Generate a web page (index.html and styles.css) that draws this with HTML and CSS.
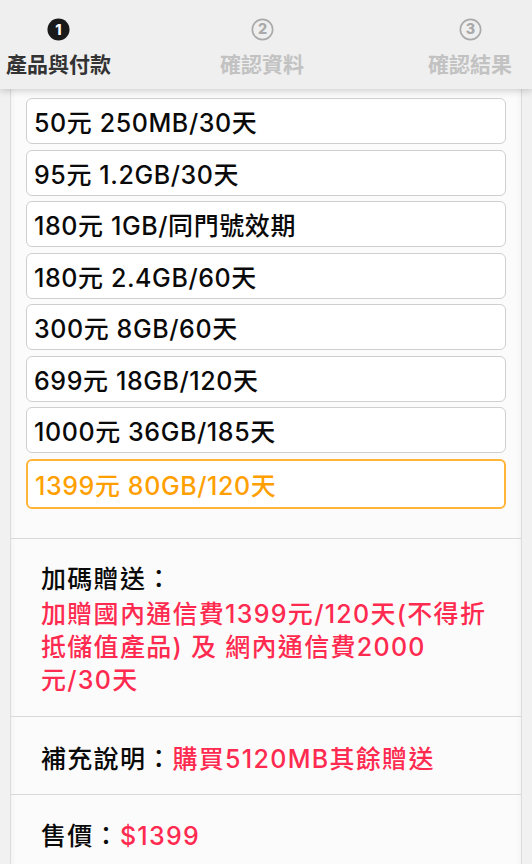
FILE: index.html
```html
<!DOCTYPE html>
<html lang="zh-Hant">
<head>
<meta charset="utf-8">
<link rel="stylesheet" href="styles.css">
</head>
<body>
<header class="steps">
  <div class="step active">
    <svg class="num" viewBox="0 0 24 24" width="23" height="23"><circle cx="12" cy="12" r="11.5" fill="#1a1a1a"/><text x="12" y="17.6" text-anchor="middle" class="numtxt" fill="#fff">1</text></svg>
    <span class="label">產品與付款</span>
  </div>
  <div class="step">
    <svg class="num" viewBox="0 0 24 24" width="23" height="23"><circle cx="12" cy="12" r="10.6" fill="none" stroke="#aaa" stroke-width="1.7"/><text x="12" y="17.2" text-anchor="middle" class="numtxt" fill="#aaa">2</text></svg>
    <span class="label">確認資料</span>
  </div>
  <div class="step">
    <svg class="num" viewBox="0 0 24 24" width="23" height="23"><circle cx="12" cy="12" r="10.6" fill="none" stroke="#aaa" stroke-width="1.7"/><text x="12" y="17.2" text-anchor="middle" class="numtxt" fill="#aaa">3</text></svg>
    <span class="label">確認結果</span>
  </div>
</header>
<main class="card">
  <div class="options">
    <div class="opt">50元 250MB/30天</div>
    <div class="opt">95元 1.2GB/30天</div>
    <div class="opt">180元 1GB/同門號效期</div>
    <div class="opt">180元 2.4GB/60天</div>
    <div class="opt">300元 8GB/60天</div>
    <div class="opt">699元 18GB/120天</div>
    <div class="opt">1000元 36GB/185天</div>
    <div class="opt selected">1399元 80GB/120天</div>
  </div>
  <section class="sec gift">
    <div class="title block">加碼贈送：</div>
    <div class="red">加贈國內通信費1399元/120天(不得折抵儲值產品) 及 網內通信費2000元/30天</div>
  </section>
  <section class="sec note">
    <span class="title">補充說明：</span><span class="red">購買5120MB其餘贈送</span>
  </section>
  <section class="sec price">
    <span class="title">售價：</span><span class="red">$1399</span>
  </section>
</main>
</body>
</html>
```
FILE: styles.css
```css
html, body {
  margin: 0;
  padding: 0;
}
body {
  width: 532px;
  height: 864px;
  overflow: hidden;
  background: #f1f1f1;
  font-family: Inter, "Noto Sans CJK TC", sans-serif;
  color: #111;
}
.steps {
  position: relative;
  z-index: 2;
  height: 89px;
  background: #efefef;
  box-shadow: 0 2px 7px rgba(0,0,0,0.18);
  display: grid;
  grid-template-columns: 214px 208px auto;
  padding-left: 6px;
  box-sizing: border-box;
}
.step {
  display: flex;
  flex-direction: column;
  align-items: center;
  width: max-content;
  padding-top: 18px;
}
.num { display: block; }
.numtxt {
  font-family: Inter, sans-serif;
  font-weight: 800;
  font-size: 15px;
}
.label {
  margin-top: 8px;
  font-size: 21px;
  font-weight: 700;
  line-height: 28px;
  color: #c2c2c2;
  font-family: "Noto Sans CJK TC", sans-serif;
}
.step.active .label { color: #333; }
.card {
  margin: 0 10px;
  background: #fbfbfb;
  border-left: 1px solid #dcdcdc;
  border-right: 1px solid #dcdcdc;
  box-shadow: inset 6px 0 6px -6px rgba(0,0,0,0.06), inset -6px 0 6px -6px rgba(0,0,0,0.06);
  height: 775px;
}
.options {
  padding: 9px 15px 29px;
  display: flex;
  flex-direction: column;
  gap: 5.5px;
}
.opt {
  height: 46px;
  box-sizing: border-box;
  border: 1.5px solid #cfcfcf;
  border-radius: 6px;
  background: #fff;
  padding-left: 7px;
  display: flex;
  align-items: center;
  font-size: 25px;
  letter-spacing: 0.6px;
  font-weight: 500;
  color: #0a0a0a;
  white-space: nowrap;
}
.opt.selected {
  height: 50px;
  border: 2px solid #ffb53a;
  color: #ffa000;
}
.sec {
  border-top: 1.5px solid #d9d9d9;
  padding: 0 30px;
  font-size: 25px;
  letter-spacing: 1.3px;
  font-weight: 500;
  line-height: 33px;
}
.gift { padding-top: 22px; padding-bottom: 19px; }
.gift .block { line-height: 37px; }
.note { padding-top: 26px; padding-bottom: 18px; }
.price { padding-top: 25px; }
.title { color: #0a0a0a; }
.red { color: #ff2a4f; }
```
